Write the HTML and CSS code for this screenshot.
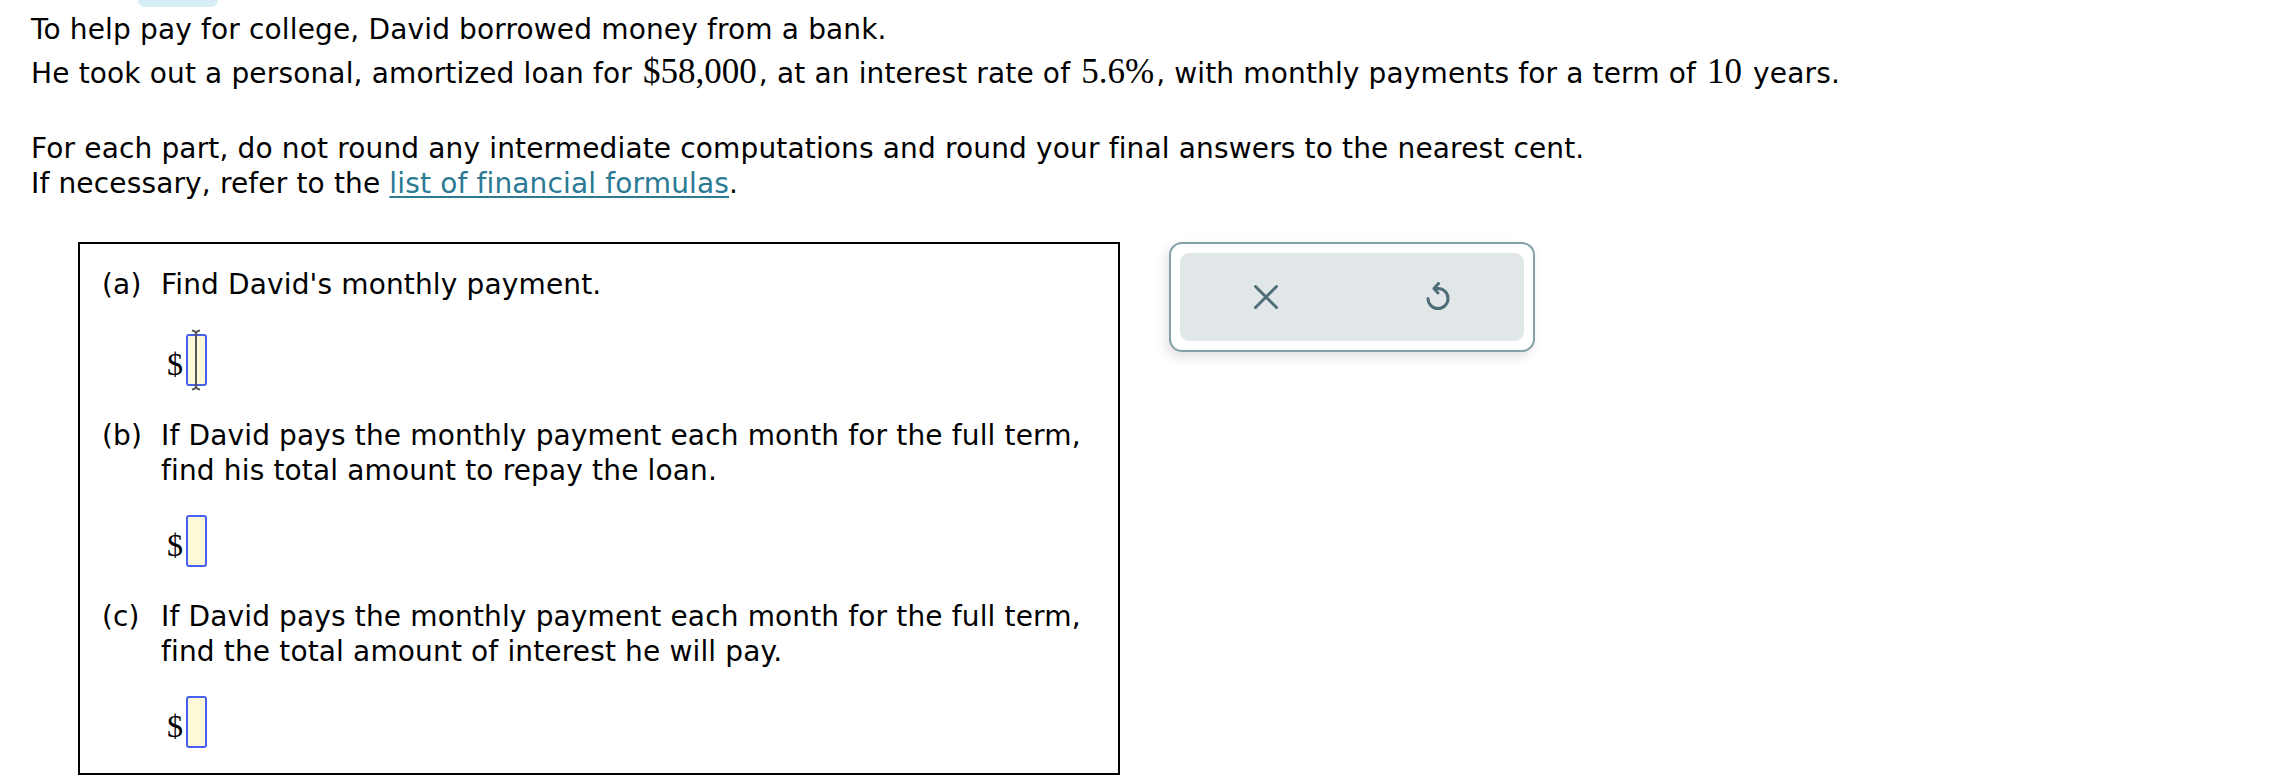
FILE: index.html
```html
<!DOCTYPE html>
<html lang="en">
<head>
<meta charset="utf-8">
<title>Amortized loan</title>
<link rel="stylesheet" href="styles.css">
</head>
<body>
<div class="page">
  <div class="tab"></div>
  <p class="line l1">To help pay for college, David borrowed money from a bank.</p>
  <p class="line l2">He took out a personal, amortized loan for <span class="m">$58,000</span>, at an interest rate of <span class="m">5.6%</span>, with monthly payments for a term of <span class="m">10</span> years.</p>
  <p class="line l3">For each part, do not round any intermediate computations and round your final answers to the nearest cent.</p>
  <p class="line">If necessary, refer to the <a class="link" href="#">list of financial formulas</a>.</p>

  <div class="work">
    <div class="box">
      <div class="part">
        <div class="q"><span class="lbl">(a)</span><span class="qt">Find David's monthly payment.</span></div>
        <div class="ans ans-a"><span class="dollar">$</span><span class="field"><svg class="ibeam" width="12" height="62" viewBox="0 0 12 62"><path d="M2 1.5 Q6 2 6 5 Q6 2 10 1.5 M6 5 V57 M2 60.5 Q6 60 6 57 Q6 60 10 60.5" fill="none" stroke="#555" stroke-width="2"/></svg></span></div>
      </div>
      <div class="part">
        <div class="q"><span class="lbl">(b)</span><span class="qt">If David pays the monthly payment each month for the full term, find his total amount to repay the loan.</span></div>
        <div class="ans"><span class="dollar">$</span><span class="field"></span></div>
      </div>
      <div class="part">
        <div class="q"><span class="lbl">(c)</span><span class="qt">If David pays the monthly payment each month for the full term, find the total amount of interest he will pay.</span></div>
        <div class="ans"><span class="dollar">$</span><span class="field"></span></div>
      </div>
    </div>

    <div class="panel">
      <div class="btns">
        <button class="btn" type="button" aria-label="Clear">
          <svg width="26" height="26" viewBox="0 0 26 26"><path d="M2.5 2.5 L23.5 23.5 M23.5 2.5 L2.5 23.5" fill="none" stroke="#4e6d77" stroke-width="3" stroke-linecap="round"/></svg>
        </button>
        <button class="btn" type="button" aria-label="Reset">
          <svg width="28" height="30" viewBox="0 0 28 30"><path d="M11 6.5 H14 A10 10 0 1 1 4 16.5" fill="none" stroke="#4e6d77" stroke-width="3" stroke-linecap="round"/><path d="M14.5 1.5 L10 6.5 L14 11" fill="none" stroke="#4e6d77" stroke-width="3" stroke-linecap="round" stroke-linejoin="round"/></svg>
        </button>
      </div>
    </div>
  </div>
</div>
</body>
</html>
```

FILE: styles.css
```css
html, body {
  margin: 0;
  padding: 0;
  background: #ffffff;
}

.page {
  padding: 0 0 0 31px;
  font-family: "DejaVu Sans", Verdana, sans-serif;
  font-size: 28px;
  letter-spacing: 0.15px;
  color: #000;
}

.tab {
  width: 80px;
  height: 7px;
  margin-left: 107px;
  background: #d5edf3;
  border-radius: 0 0 14px 14px;
}

.line {
  margin: 0;
  line-height: 35px;
  white-space: nowrap;
}

.l1 {
  margin-top: 5px;
}

.l2 {
  margin-top: 7px;
}

.l3 {
  margin-top: 40px;
}

.m {
  font-family: "Liberation Serif", "Times New Roman", serif;
  font-size: 35px;
  letter-spacing: 0;
  line-height: 1;
  padding: 0 2px;
}

.link {
  color: #2b7a93;
  text-decoration: underline;
  text-underline-offset: 3px;
}

.work {
  display: flex;
  align-items: flex-start;
  gap: 49px;
  margin-top: 41px;
  margin-left: 47px;
}

.box {
  width: 1042px;
  box-sizing: border-box;
  border: 2px solid #000;
  padding: 23px 0 25px 22px;
}

.part + .part {
  margin-top: 32px;
}

.q {
  display: flex;
  line-height: 35px;
}

.lbl {
  flex: 0 0 59px;
}

.qt {
  flex: 1;
  padding-right: 30px;
}

.ans {
  display: flex;
  align-items: center;
  margin-top: 27px;
  margin-left: 65px;
  height: 52px;
}

.ans-a {
  margin-top: 32px;
}

.dollar {
  font-family: "Liberation Serif", "Times New Roman", serif;
  font-size: 32px;
  letter-spacing: 0;
  line-height: 1;
  margin-right: 3px;
  position: relative;
  top: 4px;
}

.field {
  position: relative;
  display: inline-block;
  width: 21px;
  height: 52px;
  box-sizing: border-box;
  border: 2px solid #4760f0;
  border-radius: 3px;
  background: #fdf8d8;
}

.ibeam {
  position: absolute;
  left: 2px;
  top: -7px;
}

.panel {
  width: 366px;
  height: 110px;
  box-sizing: border-box;
  border: 2px solid #86a0a8;
  border-radius: 13px;
  padding: 9px;
  background: #fff;
  box-shadow: -3px 5px 12px rgba(0, 0, 0, 0.12);
}

.btns {
  display: flex;
  height: 100%;
  background: #e1e6e9;
  border-radius: 9px;
}

.btn {
  flex: 1;
  display: flex;
  align-items: center;
  justify-content: center;
  border: 0;
  padding: 0;
  background: transparent;
}
```
